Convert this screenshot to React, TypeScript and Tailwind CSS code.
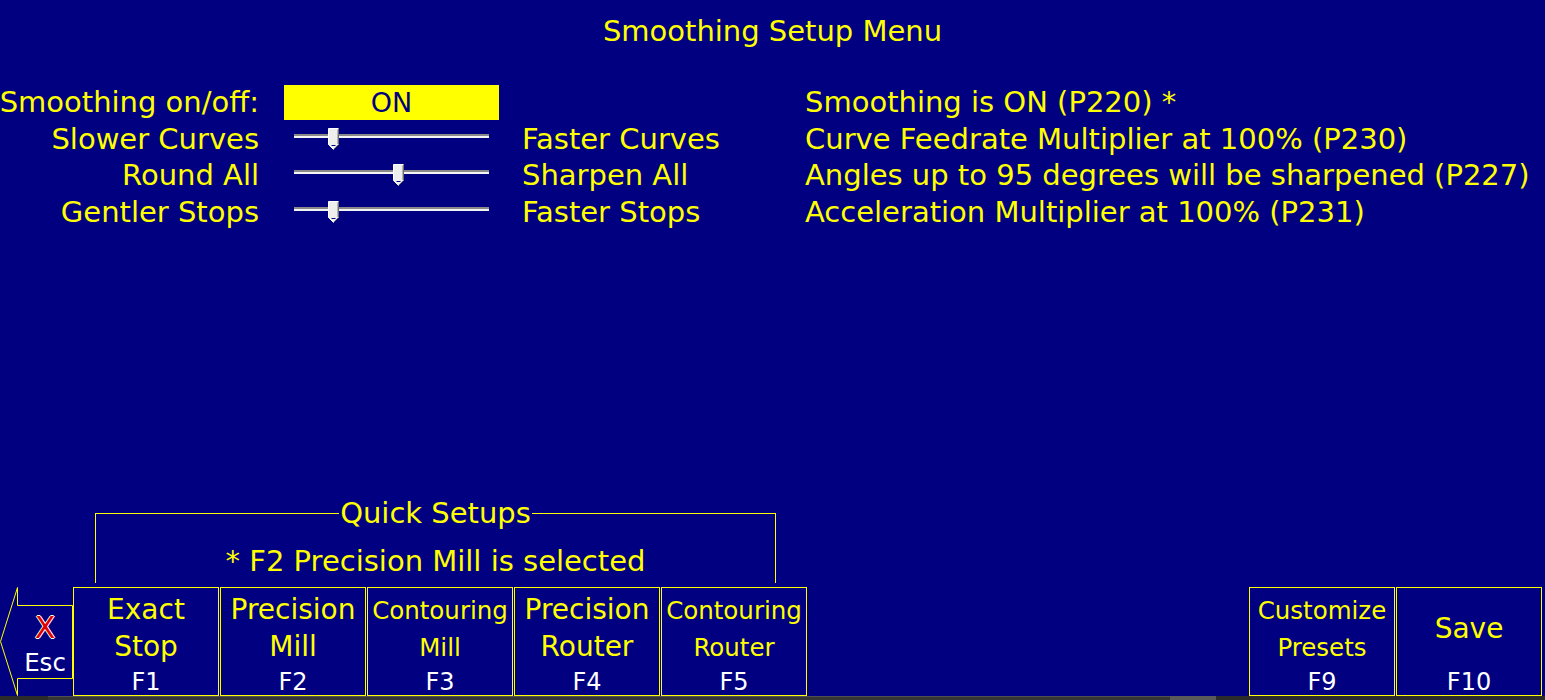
import React from "react";

type Row = {
  left: string;
  right?: string;
  info: string;
  thumb?: number;
};

const rows: Row[] = [
  { left: "Smoothing on/off:", info: "Smoothing is ON (P220) *" },
  { left: "Slower Curves", right: "Faster Curves", info: "Curve Feedrate Multiplier at 100% (P230)", thumb: 34 },
  { left: "Round All", right: "Sharpen All", info: "Angles up to 95 degrees will be sharpened (P227)", thumb: 99 },
  { left: "Gentler Stops", right: "Faster Stops", info: "Acceleration Multiplier at 100% (P231)", thumb: 34 },
];

type Key = {
  lines: string[];
  small?: boolean;
  fkey: string;
};

const leftKeys: Key[] = [
  { lines: ["Exact", "Stop"], fkey: "F1" },
  { lines: ["Precision", "Mill"], fkey: "F2" },
  { lines: ["Contouring", "Mill"], small: true, fkey: "F3" },
  { lines: ["Precision", "Router"], fkey: "F4" },
  { lines: ["Contouring", "Router"], small: true, fkey: "F5" },
];

const rightKeys: Key[] = [
  { lines: ["Customize", "Presets"], small: true, fkey: "F9" },
  { lines: ["Save"], fkey: "F10" },
];

const Slider = ({ pos }: { pos: number }) => (
  <div className="relative mx-[10px] mt-[13px] h-[4px] w-[195px] border-t-2 border-[#8a8a8a] bg-[#f4f4f4]">
    <svg
      className="absolute top-[-8px]"
      style={{ left: pos }}
      width="11"
      height="22"
      viewBox="0 0 11 22"
    >
      <path d="M0.5 0.5 H10.5 V16.5 L5.5 21.5 L0.5 16.5 Z" fill="#eeeeee" stroke="#ffffff" />
      <path d="M10.5 0.5 V16.5 L5.5 21.5" fill="none" stroke="#6e6e6e" />
      <path d="M9.5 1.5 V16" fill="none" stroke="#b4b4b4" />
      <path d="M3.5 17.5 H7.5" stroke="#000080" />
    </svg>
  </div>
);

const FKey = ({ k }: { k: Key }) => (
  <div className="flex h-[109px] w-[146px] flex-col items-center border border-solid border-[#ffff00] text-[#ffff00]">
    <div
      className={
        k.lines.length === 1
          ? "pt-[22px] text-[28px] leading-[37px]"
          : k.small
          ? "pt-[5px] text-[24.5px] leading-[36.5px]"
          : "pt-[3px] text-[28px] leading-[37px]"
      }
    >
      {k.lines.map((l) => (
        <div key={l} className="text-center whitespace-nowrap">
          {l}
        </div>
      ))}
    </div>
    <div className="mt-auto text-[24px] leading-[26px] text-white">{k.fkey}</div>
  </div>
);

export default function App() {
  return (
    <div className="flex h-[700px] w-[1545px] flex-col overflow-hidden bg-[#000080] font-['DejaVu_Sans',Verdana,sans-serif] text-[#ffff00]">
      <div className="pt-[13px] text-center text-[29px] leading-[36px]">Smoothing Setup Menu</div>

      {/* settings rows */}
      <div className="mt-[35px] grid grid-cols-[284px_215px_306px_1fr] auto-rows-[36.5px] text-[29px] leading-[36px]">
        {rows.map((r, i) => (
          <React.Fragment key={r.left}>
            <div className="flex justify-end pr-[25px] whitespace-nowrap">{r.left}</div>
            <div className="flex">
              {i === 0 ? (
                <div className="mt-[1px] flex h-[35px] w-[215px] items-center justify-center bg-[#ffff00] text-[27px] text-[#000080]">
                  ON
                </div>
              ) : (
                <Slider pos={r.thumb ?? 0} />
              )}
            </div>
            <div className="pl-[23px] whitespace-nowrap">{r.right ?? ""}</div>
            <div className="whitespace-nowrap">{r.info}</div>
          </React.Fragment>
        ))}
      </div>

      <div className="flex-1" />

      {/* quick setups frame */}
      <fieldset className="ml-[95px] w-[681px] border border-b-0 border-solid border-[#ffff00]">
        <legend className="mx-auto px-[1px] text-[29px] leading-[34px]">Quick Setups</legend>
        <div className="pt-[14px] pb-[5px] text-center text-[29px] leading-[34px]">
          * F2 Precision Mill is selected
        </div>
      </fieldset>

      {/* function keys */}
      <div className="mt-[4px] flex h-[109px]">
        <div className="relative h-[109px] w-[73px]">
          <svg className="absolute inset-0" width="73" height="109" viewBox="0 0 73 109">
            <path
              d="M17.5 0.5 V18.5 H72.5 V91.5 H17.5 V108.5 L0.5 54.5 Z"
              fill="none"
              stroke="#ffff00"
            />
          </svg>
          <div className="relative flex h-full flex-col items-center pl-[17px] pt-[24px]">
            <div className="text-[30px] leading-[34px] text-[#e00000] [text-shadow:1px_0_0_#fff,-1px_0_0_#fff,0_1px_0_#fff,0_-1px_0_#fff]">
              X
            </div>
            <div className="mt-[3px] text-[24.5px] leading-[30px] text-white">Esc</div>
          </div>
        </div>
        <div className="flex gap-[1px]">
          {leftKeys.map((k) => (
            <FKey key={k.fkey} k={k} />
          ))}
        </div>
        <div className="ml-auto flex gap-[1px] pr-[3px]">
          {rightKeys.map((k) => (
            <FKey key={k.fkey} k={k} />
          ))}
        </div>
      </div>

      {/* bottom strip */}
      <div className="flex h-[4px] bg-[#2b2b2b]">
        <div className="w-[48px]" />
        <div className="w-[1122px] border-t border-[#505050] bg-[#353535]" />
        <div className="w-[46px] bg-[#5a5a5a]" />
      </div>
    </div>
  );
}
